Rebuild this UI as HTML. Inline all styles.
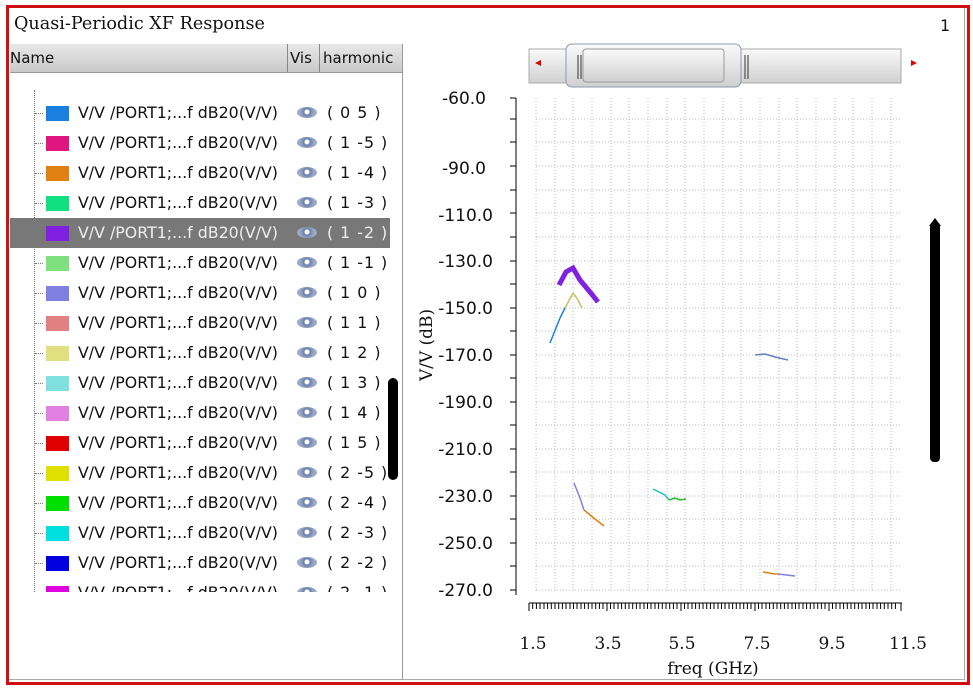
<!DOCTYPE html>
<html><head><style>
body{margin:0;width:973px;height:690px;background:#fff;position:relative;overflow:hidden;font-family:"DejaVu Sans","Liberation Sans",sans-serif;}
.frame{position:absolute;left:6px;top:5px;width:958px;height:674px;border:3px solid #d01010;}
.inner{position:absolute;left:9px;top:8px;width:955px;height:671px;border-right:1px solid #aaa;border-bottom:1px solid #aaa;}
.title{position:absolute;left:14px;top:14px;font-family:"DejaVu Serif","Liberation Serif",serif;font-size:17.6px;color:#111;}
.one{position:absolute;left:940px;top:16px;font-size:16px;color:#111;}
.hdr{position:absolute;left:10px;top:44px;width:392px;height:28px;background:linear-gradient(#e8e8e8,#c9c9c9);border-bottom:1px solid #999;font-size:15px;color:#111;}
.hdr span{position:absolute;top:5px;}
.sep{position:absolute;top:0;width:1px;height:28px;background:#888;}
.vline{position:absolute;left:402px;top:44px;width:1px;height:636px;background:#999;}
.list{position:absolute;left:10px;top:90px;width:392px;height:502px;overflow:hidden;}
.row{position:absolute;left:0;width:380px;height:30px;font-size:15.8px;color:#111;}
.row.sel{background:#787878;color:#eee;}
.sw{position:absolute;left:36px;top:8px;width:23px;height:15px;}
.row .t{position:absolute;left:68px;top:5px;white-space:nowrap;}
.row .h{position:absolute;left:317px;top:5px;white-space:pre;letter-spacing:1px;}
.eye{position:absolute;left:287px;top:9px;width:20px;height:11px;border-radius:50%;background:radial-gradient(circle at 50% 45%,#fff 0 2px,#6a7fa8 3px,#9aaac8 7px);}
.dots{position:absolute;left:24px;top:0;width:1px;height:502px;border-left:1px dotted #777;}
.dash{position:absolute;left:25px;top:15px;width:8px;border-top:1px dotted #777;}
</style></head><body>
<div class="frame"></div><div class="inner"></div>
<div class="title">Quasi-Periodic XF Response</div>
<div class="one">1</div>
<div class="hdr"><span style="left:0">Name</span><div class="sep" style="left:277px"></div><span style="left:280px">Vis</span><div class="sep" style="left:309px"></div><span style="left:313px">harmonic</span></div>
<div class="vline"></div>
<div class="list"><div class="dots"></div>
<div class="row" style="top:8px"><div class="dash"></div><div class="sw" style="background:#1a80e0"></div><span class="t">V/V /PORT1;...f dB20(V/V)</span><div class="eye"></div><span class="h">( 0 5 )</span></div>
<div class="row" style="top:38px"><div class="dash"></div><div class="sw" style="background:#e0157f"></div><span class="t">V/V /PORT1;...f dB20(V/V)</span><div class="eye"></div><span class="h">( 1 -5 )</span></div>
<div class="row" style="top:68px"><div class="dash"></div><div class="sw" style="background:#e08010"></div><span class="t">V/V /PORT1;...f dB20(V/V)</span><div class="eye"></div><span class="h">( 1 -4 )</span></div>
<div class="row" style="top:98px"><div class="dash"></div><div class="sw" style="background:#10e080"></div><span class="t">V/V /PORT1;...f dB20(V/V)</span><div class="eye"></div><span class="h">( 1 -3 )</span></div>
<div class="row sel" style="top:128px"><div class="dash"></div><div class="sw" style="background:#8020e0"></div><span class="t">V/V /PORT1;...f dB20(V/V)</span><div class="eye"></div><span class="h">( 1 -2 )</span></div>
<div class="row" style="top:158px"><div class="dash"></div><div class="sw" style="background:#80e080"></div><span class="t">V/V /PORT1;...f dB20(V/V)</span><div class="eye"></div><span class="h">( 1 -1 )</span></div>
<div class="row" style="top:188px"><div class="dash"></div><div class="sw" style="background:#8080e0"></div><span class="t">V/V /PORT1;...f dB20(V/V)</span><div class="eye"></div><span class="h">( 1 0 )</span></div>
<div class="row" style="top:218px"><div class="dash"></div><div class="sw" style="background:#e08080"></div><span class="t">V/V /PORT1;...f dB20(V/V)</span><div class="eye"></div><span class="h">( 1 1 )</span></div>
<div class="row" style="top:248px"><div class="dash"></div><div class="sw" style="background:#e0e080"></div><span class="t">V/V /PORT1;...f dB20(V/V)</span><div class="eye"></div><span class="h">( 1 2 )</span></div>
<div class="row" style="top:278px"><div class="dash"></div><div class="sw" style="background:#80e0e0"></div><span class="t">V/V /PORT1;...f dB20(V/V)</span><div class="eye"></div><span class="h">( 1 3 )</span></div>
<div class="row" style="top:308px"><div class="dash"></div><div class="sw" style="background:#e080e0"></div><span class="t">V/V /PORT1;...f dB20(V/V)</span><div class="eye"></div><span class="h">( 1 4 )</span></div>
<div class="row" style="top:338px"><div class="dash"></div><div class="sw" style="background:#e00000"></div><span class="t">V/V /PORT1;...f dB20(V/V)</span><div class="eye"></div><span class="h">( 1 5 )</span></div>
<div class="row" style="top:368px"><div class="dash"></div><div class="sw" style="background:#e0e000"></div><span class="t">V/V /PORT1;...f dB20(V/V)</span><div class="eye"></div><span class="h">( 2 -5 )</span></div>
<div class="row" style="top:398px"><div class="dash"></div><div class="sw" style="background:#00e000"></div><span class="t">V/V /PORT1;...f dB20(V/V)</span><div class="eye"></div><span class="h">( 2 -4 )</span></div>
<div class="row" style="top:428px"><div class="dash"></div><div class="sw" style="background:#00e0e0"></div><span class="t">V/V /PORT1;...f dB20(V/V)</span><div class="eye"></div><span class="h">( 2 -3 )</span></div>
<div class="row" style="top:458px"><div class="dash"></div><div class="sw" style="background:#0000e0"></div><span class="t">V/V /PORT1;...f dB20(V/V)</span><div class="eye"></div><span class="h">( 2 -2 )</span></div>
<div class="row" style="top:488px"><div class="dash"></div><div class="sw" style="background:#e000e0"></div><span class="t">V/V /PORT1;...f dB20(V/V)</span><div class="eye"></div><span class="h">( 2 -1 )</span></div>
</div>
<div style="position:absolute;left:388px;top:378px;width:10px;height:102px;background:#000;border-radius:5px"></div>
<svg style="position:absolute;left:0;top:0" width="973" height="690">
<defs><linearGradient id="g" x1="0" y1="0" x2="0" y2="1"><stop offset="0" stop-color="#fafafa"/><stop offset="1" stop-color="#d0d0d0"/></linearGradient></defs>
<rect x="529" y="49" width="372" height="34" fill="url(#g)" stroke="#aaa"/>
<rect x="566" y="44" width="175" height="43" rx="6" fill="url(#g)" stroke="#8a9ab0"/>
<rect x="583" y="49" width="141" height="33" rx="3" fill="url(#g)" stroke="#999"/>
<path d="M578 55v24M581 55v24M745 55v24M748 55v24" stroke="#333"/>
<path d="M535 63l6-3v6z" fill="#d00"/><path d="M917 63l-6-3v6z" fill="#d00"/>
<g stroke="#bbb" stroke-dasharray="1 2">
<path d="M536 119H902M536 142H902M536 166H902M536 190H902M536 213H902M536 237H902M536 261H902M536 284H902M536 308H902M536 331H902M536 355H902M536 378H902M536 402H902M536 425H902M536 449H902M536 472H902M536 496H902M536 519H902M536 543H902M536 566H902M536 590H902"/>
<path d="M536 98V592M555 98V592M573 98V592M592 98V592M611 98V592M629 98V592M648 98V592M667 98V592M685 98V592M704 98V592M723 98V592M741 98V592M760 98V592M779 98V592M797 98V592M816 98V592M835 98V592M853 98V592M872 98V592M891 98V592"/>
</g>
<path d="M516 98V595" stroke="#000"/>
<g stroke="#000">
<path d="M510 98h6M510 119h6M510 142h6M510 166h6M510 190h6M510 213h6M510 237h6M510 261h6M510 284h6M510 308h6M510 331h6M510 355h6M510 378h6M510 402h6M510 425h6M510 449h6M510 472h6M510 496h6M510 519h6M510 543h6M510 566h6M510 590h6"/>
</g>
<path d="M529 603H902" stroke="#000"/>
<path d="M529 603v8M532.7 603v6M536.4 603v6M540 603v6M544 603v6M547.6 603v6M551.3 603v6M555 603v6M558.7 603v6M562.4 603v6M566 603v6M570 603v6M573.5 603v6M577 603v6M581 603v6M584.6 603v6M588.3 603v6M592 603v6M595.7 603v6M599.4 603v6M603 603v6M607 603v8M610.5 603v6M614 603v6M618 603v6M621.6 603v6M625.3 603v6M629 603v6M632.7 603v6M636.4 603v6M640 603v6M644 603v6M647.5 603v6M651 603v6M655 603v6M658.6 603v6M662.3 603v6M666 603v6M669.7 603v6M673.4 603v6M677 603v6M681 603v8M684.5 603v6M688 603v6M692 603v6M695.6 603v6M699.3 603v6M703 603v6M706.7 603v6M710.4 603v6M714 603v6M718 603v6M721.5 603v6M725 603v6M729 603v6M732.6 603v6M736.3 603v6M740 603v6M743.7 603v6M747.4 603v6M751 603v6M755 603v8M758.5 603v6M762 603v6M766 603v6M769.6 603v6M773.3 603v6M777 603v6M780.7 603v6M784.4 603v6M788 603v6M792 603v6M795.5 603v6M799 603v6M803 603v6M806.6 603v6M810.3 603v6M814 603v6M817.7 603v6M821.4 603v6M825 603v6M829 603v8M832.5 603v6M836 603v6M840 603v6M843.6 603v6M847.3 603v6M851 603v6M854.7 603v6M858.4 603v6M862 603v6M866 603v6M869.5 603v6M873 603v6M877 603v6M880.6 603v6M884.3 603v6M888 603v6M891.7 603v6M895.4 603v6M901 603v8" stroke="#000"/>
<g font-family="DejaVu Sans,Liberation Sans,sans-serif" font-size="17" fill="#111" text-anchor="end">
<text x="486" y="104">-60.0</text><text x="486" y="174">-90.0</text><text x="493" y="221">-110.0</text><text x="493" y="267">-130.0</text><text x="493" y="314">-150.0</text><text x="493" y="361">-170.0</text><text x="493" y="408">-190.0</text><text x="493" y="455">-210.0</text><text x="493" y="502">-230.0</text><text x="493" y="549">-250.0</text><text x="493" y="596">-270.0</text>
</g>
<g font-family="DejaVu Serif,Liberation Serif,serif" font-size="17" fill="#111" text-anchor="middle">
<text x="533" y="649">1.5</text><text x="608" y="649">3.5</text><text x="682" y="649">5.5</text><text x="757" y="649">7.5</text><text x="832" y="649">9.5</text><text x="908" y="649">11.5</text>
<text x="713" y="674">freq (GHz)</text>
<text transform="translate(432,345) rotate(-90)">V/V (dB)</text>
</g>
<path d="M550 343L560 318L565 308" stroke="#1a80e0" stroke-width="1.5" fill="none"/>
<path d="M565 308L573 293L578 300L582 308" stroke="#c8c060" stroke-width="1.5" fill="none"/>
<path d="M559 285L566 272L573 268L580 280L590 292L598 302" stroke="#8020e0" stroke-width="5" fill="none"/>
<path d="M755 355L765 354L775 357L788 360" stroke="#6080c0" stroke-width="1.5" fill="none"/>
<path d="M574 483L580 498L584 510" stroke="#8080e0" stroke-width="1.5" fill="none"/>
<path d="M584 510L595 519L604 526" stroke="#e08010" stroke-width="1.5" fill="none"/>
<path d="M653 489L665 495L669 500" stroke="#20c0c0" stroke-width="1.5" fill="none"/>
<path d="M669 500L675 498L680 500L686 499" stroke="#20c020" stroke-width="1.5" fill="none"/>
<path d="M763 572L775 574L778 574" stroke="#e08010" stroke-width="1.5" fill="none"/>
<path d="M778 574L795 576" stroke="#8080e0" stroke-width="1.5" fill="none"/>
<rect x="930" y="222" width="10" height="240" rx="4" fill="#000"/>
<path d="M929 226l6-8l6 8z" fill="#000"/>
</svg>
</body></html>
